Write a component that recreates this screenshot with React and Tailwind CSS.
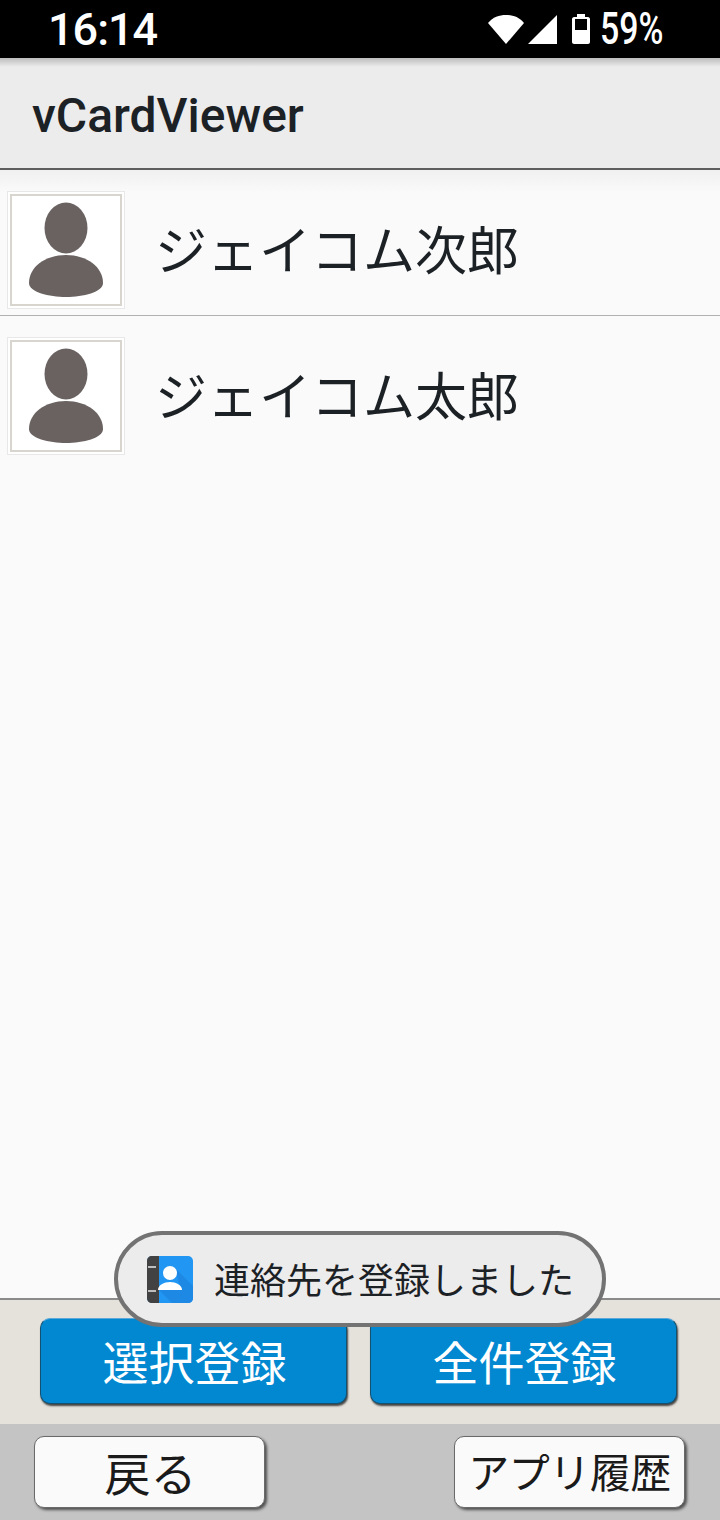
import React from 'react'

const cjk = { fontFamily: '"Noto Sans CJK JP", sans-serif' }
const roboto = { fontFamily: 'Roboto, sans-serif' }

const contacts = ['ジェイコム次郎', 'ジェイコム太郎']

const Avatar = () => (
  <div className="w-[118px] h-[118px] bg-white border border-[#e8e8e8] p-[2px] shrink-0">
    <div className="w-full h-full border-2 border-[#d8d5cf] flex items-center justify-center">
      <svg width="76" height="96" viewBox="0 0 76 96">
        <ellipse cx="38" cy="26" rx="21.5" ry="25.5" fill="#696261" />
        <path d="M1 81C1 65 17 53 38 53C59 53 75 65 75 81C75 90 55 95 38 95C21 95 1 90 1 81Z" fill="#696261" />
      </svg>
    </div>
  </div>
)

const ContactsIcon = () => (
  <svg width="46" height="47" viewBox="0 0 46 47" className="shrink-0">
    <rect width="46" height="47" rx="5" fill="#2196f3" />
    <path d="M28 12L46 30V42C46 45 44 47 41 47H25L12 34H34Z" fill="#1e88e5" />
    <path d="M12 0H5C2 0 0 2 0 5V42C0 45 2 47 5 47H12Z" fill="#424242" />
    <rect x="1" y="10" width="8" height="2" fill="#bdbdbd" />
    <rect x="1" y="34" width="8" height="2" fill="#bdbdbd" />
    <circle cx="23" cy="17" r="7" fill="#fff" />
    <path d="M11 34C11 29 17 26 23 26C29 26 35 29 35 34Z" fill="#fff" />
  </svg>
)

export default function App() {
  return (
    <div className="relative w-[720px] h-[1520px] flex flex-col overflow-hidden bg-[#fafafa]">
      <div className="h-[58px] bg-black text-white flex items-center justify-between pl-[48px] pr-[57px] shrink-0" style={roboto}>
        <span className="text-[45px] leading-none font-medium tracking-[-1px]">16:14</span>
        <div className="flex items-center">
          <svg width="36" height="30" viewBox="0 0 36 30">
            <path d="M0 9C5 3 11 1 18 1C25 1 31 3 36 9L18 30Z" fill="#fff" />
          </svg>
          <svg width="29" height="30" viewBox="0 0 29 30" className="ml-[4px]">
            <path d="M29 1V30H0Z" fill="#fff" />
          </svg>
          <svg width="18" height="30" viewBox="0 0 18 30" className="ml-[15px]">
            <path d="M5 0H13V3H16C17 3 18 4 18 5V28C18 29 17 30 16 30H2C1 30 0 29 0 28V5C0 4 1 3 2 3H5Z" fill="#fff" />
            <rect x="3" y="5" width="12" height="11" fill="#000" />
          </svg>
          <span className="ml-[10px] w-[63px] flex justify-end">
            <span className="text-[44px] leading-none font-medium scale-x-[0.77] origin-right whitespace-nowrap">59%</span>
          </span>
        </div>
      </div>

      <div className="h-[112px] border-b-2 border-[#5e5e5e] flex items-center pl-[32px] pt-[5px] shrink-0 bg-gradient-to-b from-[#bcbcbc] from-0% to-[#ececec] to-[8%]">
        <span className="text-[48px] leading-none font-medium text-[#1c2125]" style={roboto}>vCardViewer</span>
      </div>

      <div className="flex-1 min-h-0 bg-gradient-to-b from-[#f0f0f0] from-0% to-[#fafafa] to-[2%]">
        {contacts.map((name) => (
          <div key={name} className="h-[146px] border-b border-[#b0b0b0] last:border-b-0 flex items-start pl-[7px] pt-[21px]">
            <Avatar />
            <span className="ml-[30px] h-[118px] flex items-center pb-[4px] text-[52px] leading-none text-[#1c2125]" style={cjk}>{name}</span>
          </div>
        ))}
      </div>

      <div className="h-[126px] bg-[#e5e2dc] border-t-2 border-[#8a8a8a] flex gap-[23px] pl-[40px] pt-[18px] shrink-0">
        {['選択登録', '全件登録'].map((label) => (
          <button key={label} className="w-[307px] h-[86px] rounded-[10px] bg-[#0288d1] border border-[#14506f] border-t-[#5aa8d8] shadow-[1px_2px_2px_rgba(0,0,0,0.7)] text-white text-[46px] leading-none pb-[2px] pl-[2px]" style={cjk}>
            {label}
          </button>
        ))}
      </div>

      <div className="h-[96px] bg-[#c4c4c4] flex justify-between pl-[34px] pr-[35px] pt-[12px] shrink-0">
        {['戻る', 'アプリ履歴'].map((label) => (
          <button key={label} className={`w-[231px] h-[72px] rounded-[10px] bg-[#fafafa] border border-[#6a6a6a] shadow-[2px_2px_3px_rgba(0,0,0,0.6)] text-[#1a1a1a] leading-none pb-[3px] ${label === '戻る' ? 'text-[46px] pl-[2px]' : 'text-[41px] tracking-[-0.5px]'}`} style={cjk}>
            {label}
          </button>
        ))}
      </div>

      <div className="absolute left-[114px] top-[1231px] w-[492px] h-[96px] rounded-[48px] border-4 border-[#737373] bg-[#ececec] flex items-center pl-[29px]">
        <ContactsIcon />
        <span className="ml-[21px] pb-[2px] text-[36px] leading-none text-[#1c2125] whitespace-nowrap" style={cjk}>連絡先を登録しました</span>
      </div>
    </div>
  )
}
